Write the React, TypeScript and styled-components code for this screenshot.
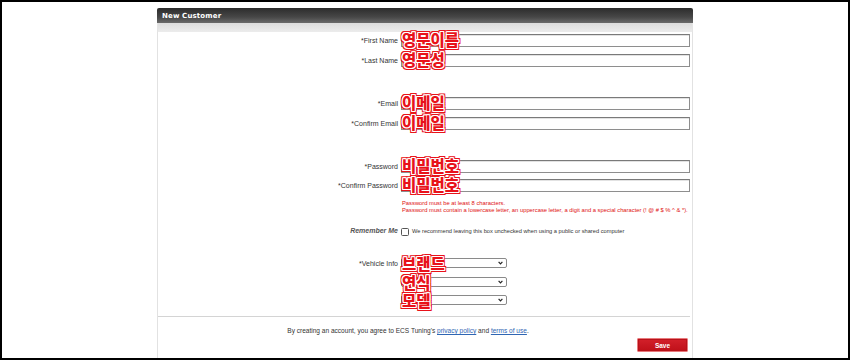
import React from "react";
import styled, { createGlobalStyle } from "styled-components";

const Global = createGlobalStyle`
  html, body { margin: 0; padding: 0; background: #fff; }
  * { box-sizing: border-box; }
`;

const Frame = styled.div`
  width: 850px;
  height: 360px;
  border: 2px solid #000;
  background: #fff;
  overflow: hidden;
  font-family: "Liberation Sans", Arial, sans-serif;
`;

const Panel = styled.section`
  width: 536px;
  margin: 6px auto 0;
  display: flex;
  flex-direction: column;
  height: 356px;
`;

const Header = styled.header`
  height: 15px;
  background: linear-gradient(#2c2c2c, #474747 60%, #6a6a6a);
  display: flex;
  align-items: center;
  padding-left: 5px;
  border-radius: 2px 2px 0 0;
`;

const Title = styled.h2`
  margin: 0;
  font-family: "DejaVu Sans", Verdana, sans-serif;
  font-weight: bold;
  font-size: 7px;
  color: #fff;
  letter-spacing: 0.15px;
`;

const Strip = styled.div`
  height: 9px;
  background: linear-gradient(#dcdcdc, #ececec);
  border-left: 1px solid #e4e4e4;
  border-right: 1px solid #e4e4e4;
`;

const Body = styled.div`
  flex: 1;
  border-left: 1px solid #e2e2e2;
  border-right: 1px solid #e2e2e2;
  padding: 0 2px 0 0;
  display: flex;
  flex-direction: column;
`;

const FieldRow = styled.div<{ $mt: number; $h?: number }>`
  display: grid;
  grid-template-columns: 240px 1fr;
  column-gap: 3px;
  align-items: center;
  height: ${(p) => p.$h ?? 13}px;
  margin-top: ${(p) => p.$mt}px;
`;

const Label = styled.label<{ $remember?: boolean }>`
  text-align: right;
  font-size: 7px;
  color: ${(p) => (p.$remember ? "#555" : "#333")};
  font-style: ${(p) => (p.$remember ? "italic" : "normal")};
  font-weight: ${(p) => (p.$remember ? "bold" : "normal")};
  white-space: nowrap;
`;

const FieldWrap = styled.div`
  position: relative;
  height: 100%;
`;

const TextInput = styled.div`
  height: 13px;
  border: 1px solid #8e8e8e;
  border-top-color: #7a7a7a;
  box-shadow: inset 1px 1px 0 #e2e2e2;
  background: #fff;
`;

const Note = styled.span<{ $top?: number }>`
  position: absolute;
  left: 1px;
  top: ${(p) => p.$top ?? -3}px;
  font-family: "Noto Sans CJK KR", sans-serif;
  font-weight: 900;
  font-size: 15.5px;
  line-height: 16px;
  color: #e8121a;
  pointer-events: none;
  white-space: nowrap;
  text-shadow:
    1px 0 #fff, -1px 0 #fff, 0 1px #fff, 0 -1px #fff,
    1px 1px #fff, -1px -1px #fff, 1px -1px #fff, -1px 1px #fff,
    2px 0 #e8121a, -2px 0 #e8121a, 0 2px #e8121a, 0 -2px #e8121a,
    2px 2px #e8121a, -2px -2px #e8121a, 2px -2px #e8121a, -2px 2px #e8121a;
`;

const Errors = styled.div`
  margin: 8px 0 0 244px;
  color: #e01010;
  font-size: 5.8px;
  line-height: 7px;
  white-space: nowrap;
`;

const CheckLine = styled.div`
  display: flex;
  align-items: center;
  gap: 3px;
`;

const CheckBox = styled.span`
  width: 8px;
  height: 8px;
  border: 1px solid #555;
  border-radius: 1.5px;
  background: #fff;
  margin-top: 3px;
`;

const Hint = styled.span`
  font-size: 5.7px;
  color: #333;
  white-space: nowrap;
`;

const SelectBox = styled.div`
  width: 106px;
  height: 10px;
  border: 1px solid #8a8a8a;
  border-radius: 2px;
  background: #fff;
  position: relative;
`;

const Chevron = styled.svg`
  position: absolute;
  right: 3px;
  top: 2px;
  width: 5px;
  height: 4px;
`;

const Rule = styled.hr`
  margin: 11px 0 0 0;
  border: 0;
  border-top: 1px solid #d4d4d4;
  height: 0;
`;

const Agree = styled.p`
  margin: 9px 0 0 0;
  padding-right: 32px;
  text-align: center;
  font-size: 6.55px;
  line-height: 10px;
  color: #333;
  a { color: #2f66b3; text-decoration: underline; }
`;

const Actions = styled.div`
  display: flex;
  justify-content: flex-end;
  padding-right: 2px;
  margin-top: 2px;
`;

const SaveButton = styled.button`
  width: 51px;
  height: 14px;
  padding: 0;
  border: 1px solid #e8797c;
  box-shadow: inset 0 0 0 1px #b8121a;
  background: linear-gradient(#d3202a, #bf1019);
  color: #fff;
  font-family: "Liberation Sans", Arial, sans-serif;
  font-weight: bold;
  font-size: 6.5px;
  border-radius: 1px;
`;

function Field({ label, note, mt }: { label: string; note: string; mt: number }) {
  return (
    <FieldRow $mt={mt}>
      <Label>{label}</Label>
      <FieldWrap>
        <TextInput />
        <Note>{note}</Note>
      </FieldWrap>
    </FieldRow>
  );
}

function Select({ label, note, mt }: { label: string; note: string; mt: number }) {
  return (
    <FieldRow $mt={mt} $h={10}>
      <Label>{label}</Label>
      <FieldWrap>
        <SelectBox>
          <Chevron viewBox="0 0 5 4">
            <path d="M0.6 0.8 L2.5 2.8 L4.4 0.8" fill="none" stroke="#222" strokeWidth="1.2" />
          </Chevron>
        </SelectBox>
        <Note $top={-3}>{note}</Note>
      </FieldWrap>
    </FieldRow>
  );
}

export default function App() {
  return (
    <>
      <Global />
      <Frame>
        <Panel>
          <Header>
            <Title>New Customer</Title>
          </Header>
          <Strip />
          <Body>
            <Field label="*First Name" note="영문이름" mt={2} />
            <Field label="*Last Name" note="영문성" mt={7} />
            <Field label="*Email" note="이메일" mt={30} />
            <Field label="*Confirm Email" note="이메일" mt={7} />
            <Field label="*Password" note="비밀번호" mt={30} />
            <Field label="*Confirm Password" note="비밀번호" mt={6} />
            <Errors>
              <div>Password must be at least 8 characters.</div>
              <div>
                Password must contain a lowercase letter, an uppercase letter, a digit and a special
                character (! @ # $ % ^ &amp; *).
              </div>
            </Errors>
            <FieldRow $mt={11} $h={9}>
              <Label $remember>Remember Me</Label>
              <CheckLine>
                <CheckBox />
                <Hint>We recommend leaving this box unchecked when using a public or shared computer</Hint>
              </CheckLine>
            </FieldRow>
            <Select label="*Vehicle Info" note="브랜드" mt={24} />
            <Select label="" note="연식" mt={9} />
            <Select label="" note="모델" mt={8} />
            <Rule />
            <Agree>
              By creating an account, you agree to ECS Tuning's <a href="#">privacy policy</a> and{" "}
              <a href="#">terms of use</a>.
            </Agree>
            <Actions>
              <SaveButton>Save</SaveButton>
            </Actions>
          </Body>
        </Panel>
      </Frame>
    </>
  );
}
